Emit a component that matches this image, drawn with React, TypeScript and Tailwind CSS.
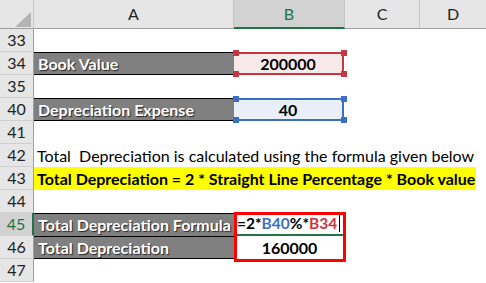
import React from 'react';

const font = { fontFamily: 'Lato, "Open Sans", sans-serif' };

const RowHead: React.FC<{ n: number; active?: boolean }> = ({ n, active }) => (
  <div
    className={
      'w-[34px] shrink-0 flex items-center justify-center text-[16px] border-b border-b-[#d0d0d0] ' +
      (active
        ? 'bg-[#d2d2d2] text-[#217346] border-r-2 border-r-[#217346]'
        : 'bg-[#e6e6e6] text-[#222] border-r border-r-[#9e9e9e]')
    }
  >
    {n}
  </div>
);

const Label: React.FC<{ text: string; top?: boolean; bottom?: boolean }> = ({ text, top = true, bottom = true }) => (
  <div
    className={
      'w-[200px] shrink-0 bg-[#808080] border-black flex items-center pl-[4px] text-white font-bold text-[16px] whitespace-nowrap [text-shadow:1px_1px_1px_rgba(0,0,0,0.7)] ' +
      (top ? 'border-t ' : '') +
      (bottom ? 'border-b' : '')
    }
  >
    {text}
  </div>
);

const Handle: React.FC<{ className: string; color: string }> = ({ className, color }) => (
  <span className={'absolute w-[6px] h-[6px] ' + className} style={{ background: color }} />
);

const RefCell: React.FC<{ value: string; color: string; fill: string }> = ({ value, color, fill }) => (
  <div className="w-[111px] shrink-0 relative">
    <div
      className="absolute left-0 right-[1px] top-0 bottom-0 flex items-center justify-center font-bold text-[16px] text-black border-y-2 border-r-2"
      style={{ background: fill, borderColor: color }}
    >
      {value}
    </div>
    <Handle className="-left-[1px] -top-[2px]" color={color} />
    <Handle className="-left-[1px] -bottom-[2px]" color={color} />
    <Handle className="-right-[2px] -top-[2px]" color={color} />
    <Handle className="-right-[2px] -bottom-[2px]" color={color} />
  </div>
);

const Row: React.FC<{ n: number; active?: boolean; children?: React.ReactNode }> = ({ n, active, children }) => (
  <div className="flex h-[23px]">
    <RowHead n={n} active={active} />
    {children}
  </div>
);

export default function App() {
  return (
    <div className="w-[486px] h-[283px] bg-white overflow-hidden text-black" style={font}>
      {/* column headers */}
      <div className="flex h-[29px] bg-[#e6e6e6] text-[16px] text-[#222]">
        <div className="w-[34px] shrink-0 relative border-r border-[#c6c6c6] border-b border-b-[#9e9e9e]">
          <svg className="absolute left-[15px] top-[12px]" width="16" height="15" viewBox="0 0 16 15">
            <polygon points="16,0 16,15 0,15" fill="#b4b4b4" />
          </svg>
        </div>
        <div className="w-[200px] shrink-0 flex items-center justify-center border-r border-[#c6c6c6] border-b border-b-[#9e9e9e]">A</div>
        <div className="w-[111px] shrink-0 flex items-center justify-center bg-[#d2d2d2] text-[#217346] border-r border-[#c6c6c6] border-b-2 border-b-[#217346]">B</div>
        <div className="w-[75px] shrink-0 flex items-center justify-center border-r border-[#c6c6c6] border-b border-b-[#9e9e9e]">C</div>
        <div className="flex-1 flex items-center justify-center border-b border-b-[#9e9e9e]">D</div>
      </div>

      <Row n={33} />
      <Row n={34}>
        <Label text="Book Value" />
        <RefCell value="200000" color="#c8373f" fill="#f7e8e9" />
      </Row>
      <Row n={35} />
      <Row n={40}>
        <Label text="Depreciation Expense" />
        <RefCell value="40" color="#3a6fc4" fill="#e8eff9" />
      </Row>
      <Row n={41} />
      <Row n={42}>
        <div className="pl-[3px] flex items-center text-[16px] whitespace-pre">
          Total  Depreciation is calculated using the formula given below
        </div>
      </Row>
      <Row n={43}>
        <div className="w-[442px] shrink-0 bg-[#ffff00] pl-[3px] flex items-center text-[16px] font-bold whitespace-nowrap">
          Total Depreciation = 2 * Straight Line Percentage * Book value
        </div>
      </Row>
      <Row n={44} />
      <div className="relative">
        <Row n={45} active>
          <Label text="Total Depreciation Formula" bottom={false} />
          <div className="w-[111px] shrink-0 flex items-center pl-[3px] text-[15.5px] font-bold whitespace-nowrap border-b-2 border-[#217346]">
            <span>=2*</span>
            <span className="text-[#3a6fc4]">B40</span>
            <span>%*</span>
            <span className="text-[#c8373f]">B34</span>
            <span className="ml-[2px] w-px h-[17px] bg-black" />
          </div>
        </Row>
        <Row n={46}>
          <Label text="Total Depreciation" />
          <div className="w-[111px] shrink-0 flex items-center justify-center text-[16px] font-bold">160000</div>
        </Row>
        <div className="absolute left-[234px] top-[-1px] w-[112px] h-[50px] border-[3px] border-[#ff0000]" />
      </div>
      <Row n={47} />
    </div>
  );
}
